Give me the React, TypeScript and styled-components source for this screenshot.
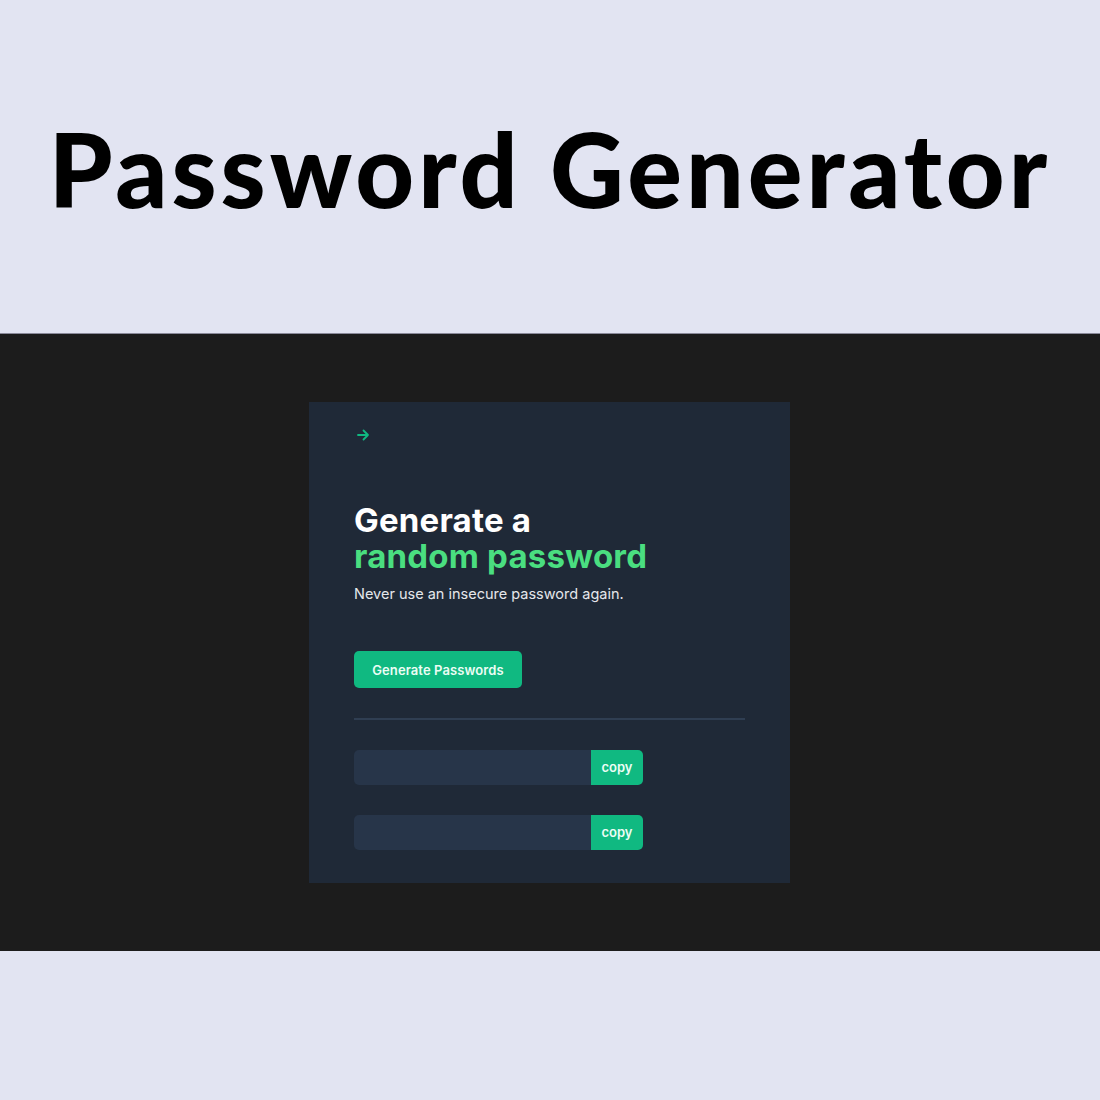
import React from "react";
import styled, { createGlobalStyle } from "styled-components";

const Global = createGlobalStyle`
  html, body { margin: 0; padding: 0; }
  body { background: #e2e4f2; font-family: "Inter", "Liberation Sans", sans-serif; }
`;

const Page = styled.div`
  width: 1100px;
  height: 1100px;
  display: flex;
  flex-direction: column;
  background: #e2e4f2;
`;

const Header = styled.header`
  height: 333px;
  display: flex;
  align-items: center;
  justify-content: center;
  box-sizing: border-box;
  padding-top: 4px;
`;

const Title = styled.h1`
  margin: 0;
  font-family: "Lato", "Liberation Sans", sans-serif;
  font-weight: 900;
  font-size: 102px;
  letter-spacing: 4px;
  color: #000;
  line-height: 1;
`;

const Band = styled.section`
  height: 618px;
  background: #1c1c1c;
  border-top: 1px solid #8a8a9a;
  box-sizing: border-box;
  display: flex;
  padding: 68px 0 0 309px;
`;

const Card = styled.div`
  width: 481px;
  height: 481px;
  background: #1f2937;
  box-sizing: border-box;
  padding: 26px 45px 0 45px;
  display: flex;
  flex-direction: column;
`;

const Arrow = styled.div`
  height: 14px;
  display: flex;
  align-items: center;
  margin-left: 3px;
`;

const Heading = styled.h2`
  margin: 60px 0 0 0;
  font-family: "Inter", sans-serif;
  font-weight: 700;
  font-size: 33px;
  line-height: 36px;
  letter-spacing: 0.2px;
  color: #ffffff;
`;

const Green = styled.span`
  display: block;
  color: #4ade80;
`;

const Sub = styled.p`
  margin: 11px 0 0 0;
  font-size: 14.5px;
  line-height: 18px;
  color: #e5e7eb;
  font-weight: 400;
`;

const GenButton = styled.button`
  margin-top: 48px;
  width: 168px;
  height: 37px;
  border: none;
  border-radius: 5px;
  background: #10b981;
  color: #ecfdf5;
  font-family: "Inter", sans-serif;
  font-weight: 600;
  font-size: 13px;
  letter-spacing: 0.1px;
  padding: 0;
  align-self: flex-start;
`;

const Divider = styled.hr`
  margin: 30px 0 0 0;
  border: none;
  height: 2px;
  background: #2f3e52;
  width: 391px;
`;

const Rows = styled.div`
  margin-top: 30px;
  display: flex;
  flex-direction: column;
  gap: 30px;
`;

const Row = styled.div`
  display: flex;
  width: 289px;
  height: 35px;
`;

const Field = styled.div`
  flex: 1;
  background: #273549;
  border-radius: 5px 0 0 5px;
`;

const Copy = styled.button`
  width: 52px;
  border: none;
  background: #10b981;
  border-radius: 0 5px 5px 0;
  color: #ecfdf5;
  font-family: "Inter", sans-serif;
  font-weight: 600;
  font-size: 13px;
  padding: 0 0 2px 0;
`;

export default function App() {
  return (
    <>
      <Global />
      <Page>
        <Header>
          <Title>Password Generator</Title>
        </Header>
        <Band>
          <Card>
            <Arrow>
              <svg width="13" height="12" viewBox="0 0 13 12" fill="none">
                <path d="M1 6h10M6.5 1.5L11 6l-4.5 4.5" stroke="#10b981" strokeWidth="1.8" strokeLinecap="round" strokeLinejoin="round" />
              </svg>
            </Arrow>
            <Heading>
              Generate a
              <Green>random password</Green>
            </Heading>
            <Sub>Never use an insecure password again.</Sub>
            <GenButton>Generate Passwords</GenButton>
            <Divider />
            <Rows>
              <Row>
                <Field />
                <Copy>copy</Copy>
              </Row>
              <Row>
                <Field />
                <Copy>copy</Copy>
              </Row>
            </Rows>
          </Card>
        </Band>
        <div />
      </Page>
    </>
  );
}
